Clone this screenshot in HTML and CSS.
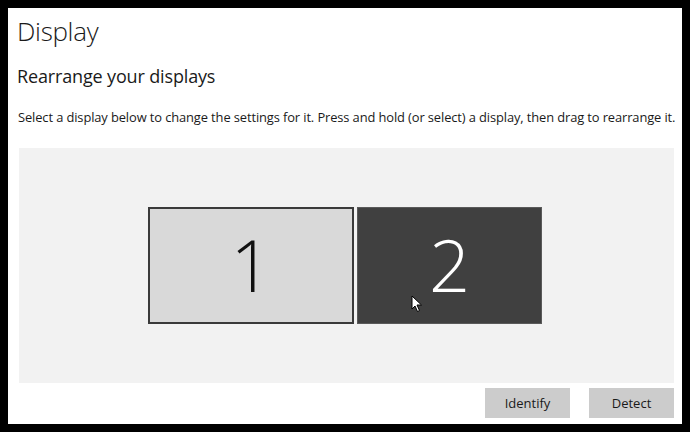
FILE: index.html
```html
<!DOCTYPE html>
<html lang="en">
<head>
    <meta charset="UTF-8">
    <meta name="viewport" content="width=device-width, initial-scale=1.0">
    <title>Display</title>
    <link rel="stylesheet" href="styles.css">
</head>
<body>
    <div class="window">
        <h1>Display</h1>
        <h2>Rearrange your displays</h2>
        <p class="hint">Select a display below to change the settings for it. Press and hold (or select) a display, then drag to rearrange it.</p>
        <section class="canvas">
            <div class="monitor">1</div>
            <div class="monitor active">
                2
                <svg class="cursor" width="12" height="18" viewBox="0 0 12 18">
                    <path d="M1 1 L1 14 L4 11 L6.5 16.5 L8.5 15.5 L6 10 L10.5 10 Z" fill="#fff" stroke="#000" stroke-width="1" stroke-linejoin="round"/>
                </svg>
            </div>
        </section>
        <div class="actions">
            <input type="button" value="Identify">
            <input type="button" value="Detect">
        </div>
    </div>
</body>
</html>
```

FILE: styles.css
```css
:root{
    --canvas-bg : #f2f2f2;
    --btn-bg : #cccccc;
    --text : #1a1a1a;
}

html, body {
    margin : 0;
    background-color : #000;
}

body {
    padding : 8px;
    font-family : "Open Sans", "Noto Sans", sans-serif;
    color : var(--text);
}

.window {
    width : 674px;
    height : 416px;
    box-sizing : border-box;
    background-color : #fff;
    padding : 0 8px 0 9px;
}

h1 {
    margin : 0;
    font-weight : 300;
    font-size : 26px;
    line-height : 46px;
    letter-spacing : -0.3px;
}

h2 {
    margin : 0;
    font-weight : 400;
    font-size : 18px;
    line-height : 44px;
    letter-spacing : -0.15px;
}

.hint {
    margin : 0;
    font-size : 12.9px;
    line-height : 38px;
    padding-left : 1px;
    letter-spacing : -0.11px;
    white-space : nowrap;
}

.canvas {
    margin : 12px 0 0 2px;
    height : 235px;
    background-color : var(--canvas-bg);
    display : flex;
    align-items : center;
    justify-content : center;
    gap : 3px;
    padding-right : 3px;
}

.monitor {
    position : relative;
    width : 206px;
    height : 117px;
    box-sizing : border-box;
    border : 2px solid #3a3a3a;
    background-color : #d9d9d9;
    display : flex;
    align-items : center;
    justify-content : center;
    padding-bottom : 4px;
    font-weight : 300;
    font-size : 72px;
    color : #111;
}

.monitor.active {
    width : 185px;
    border : 1px solid #5a5a5a;
    background-color : #404040;
    color : #fff;
}

.cursor {
    position : absolute;
    left : 53px;
    top : 87px;
}

.actions {
    display : flex;
    justify-content : flex-end;
    gap : 19px;
    margin-top : 5px;
}

input[type=button] {
    width : 85px;
    height : 30px;
    border : none;
    background-color : var(--btn-bg);
    font-family : inherit;
    font-size : 13px;
    color : var(--text);
    padding : 0;
}
```
